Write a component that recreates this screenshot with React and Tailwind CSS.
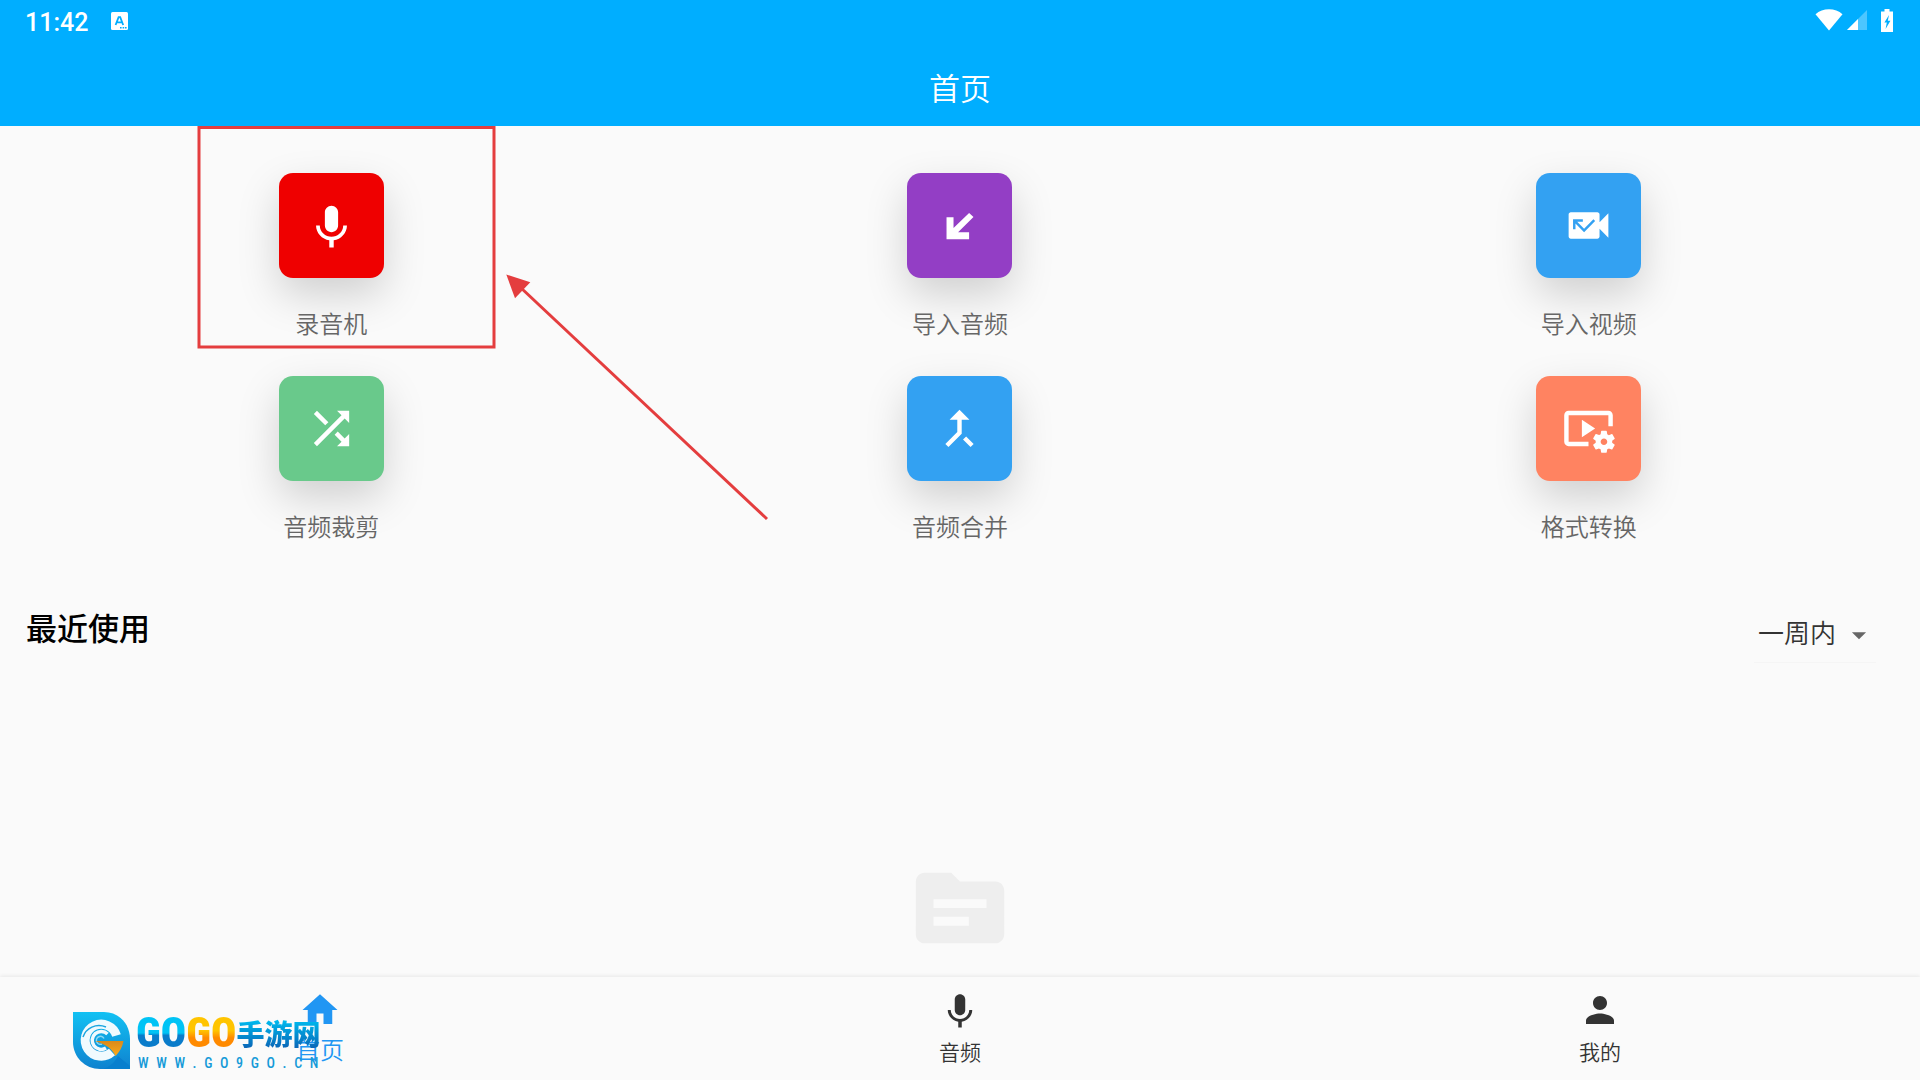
import { useState } from "react";
import {
  MdMissedVideoCall,
  MdShuffle,
  MdCallMerge,
  MdVideoSettings,
  MdSource,
  MdHome,
  MdPerson,
  MdArrowDropDown,
} from "react-icons/md";

const MicIcon = ({ className }) => (
  <svg viewBox="0 -1 24 24" fill="currentColor" className={className} aria-hidden="true">
    <path d="M12 14c1.66 0 2.99-1.34 2.99-3L15 5c0-1.66-1.34-3-3-3S9 3.34 9 5v6c0 1.66 1.34 3 3 3zm5.3-3c0 3-2.54 5.1-5.3 5.1S6.7 14 6.7 11H5c0 3.41 2.72 6.23 6 6.72V21h2v-3.28c3.28-.48 6-3.3 6-6.72h-1.7z" />
  </svg>
);

const ImportIcon = () => (
  <svg viewBox="0 0 24 24" fill="currentColor" className="size-[42px]" aria-hidden="true">
    <path d="M19.7 6.9 17.2 4.6 8.3 13.2V7H4.3v12.6h12.9v-4h-6.3z" />
  </svg>
);

const TOOLS = [
  { name: "录音机", color: "bg-[#ef0000]", icon: <MicIcon className="size-[53px]" /> },
  { name: "导入音频", color: "bg-[#933ec5]", icon: <ImportIcon /> },
  { name: "导入视频", color: "bg-[#33a1f2]", icon: <MdMissedVideoCall className="size-[53px]" /> },
  { name: "音频裁剪", color: "bg-[#69c98b]", icon: <MdShuffle className="size-[53px]" /> },
  { name: "音频合并", color: "bg-[#33a1f2]", icon: <MdCallMerge className="size-[53px]" /> },
  { name: "格式转换", color: "bg-[#ff8361]", icon: <MdVideoSettings className="size-[53px]" /> },
];

const TABS = [
  { name: "首页", icon: <MdHome className="size-[42px]" /> },
  { name: "音频", icon: <MicIcon className="size-[42px]" /> },
  { name: "我的", icon: <MdPerson className="size-[42px]" /> },
];

const StatusBar = () => (
  <div className="flex h-[42px] items-center justify-between pr-[27px] pl-[25px]">
    <div className="flex items-center gap-[23px]">
      <span className="pt-[4px] font-[Roboto,sans-serif] text-[25px] leading-[40px] font-medium">
        11:42
      </span>
      <svg viewBox="0 0 17 18" className="h-[18px] w-[17px]" aria-hidden="true">
        <rect width="17" height="18" rx="1.5" fill="#fff" />
        <path
          d="M4.6 13 7.6 5.2h1.6l3 7.8M5.8 10.4h5"
          fill="none"
          stroke="#00aeff"
          strokeWidth="1.8"
        />
        <path d="M9 15h1.6v1.6H9zM11.6 15h1.6v1.6h-1.6zM14 15h1.6v1.6H14z" fill="#00aeff" />
      </svg>
    </div>
    <div className="flex items-center pb-[2px]">
      <svg viewBox="0 0 28 22" className="h-[22px] w-[28px]" aria-hidden="true">
        <path d="M14 21.5.5 5.2C4 2 9 .3 14 .3S24 2 27.5 5.2z" fill="#fff" />
      </svg>
      <svg viewBox="0 0 20 20" className="ml-1 h-[20px] w-[20px]" aria-hidden="true">
        <path d="M0 20 20 0v20z" fill="#fff" fillOpacity=".3" />
        <path d="M0 20 11 9v11z" fill="#fff" />
      </svg>
      <svg viewBox="0 0 12 23" className="ml-[14px] h-[23px] w-[12px]" aria-hidden="true">
        <path d="M3.5 0h5v2.5H12V23H0V2.5h3.5z" fill="#fff" />
        <path d="M8 6 3.4 13.6h2.4L4.6 20l4.8-8.2H6.8z" fill="#00aeff" />
      </svg>
    </div>
  </div>
);

const Header = () => (
  <header className="bg-[#00aeff] text-white">
    <StatusBar />
    <h1 className="flex h-[84px] items-center justify-center pt-[5px] text-[31px] leading-[46px]">
      首页
    </h1>
  </header>
);

const ToolGrid = () => (
  <div className="grid grid-cols-3 gap-y-[20px] px-[17px] pt-[47px]">
    {TOOLS.map((tool) => (
      <button
        key={tool.name}
        type="button"
        className="flex cursor-pointer flex-col items-center justify-self-center text-[24px] leading-[36px] text-[#666]"
      >
        <span
          className={`flex size-[105px] items-center justify-center rounded-[14px] text-white shadow-[0_17px_42px_rgba(0,0,0,0.17)] ${tool.color}`}
        >
          {tool.icon}
        </span>
        <span className="mt-[27px] h-[51px]">{tool.name}</span>
      </button>
    ))}
  </div>
);

const Highlight = () => (
  <svg
    viewBox="0 0 580 400"
    className="pointer-events-none absolute top-[126px] left-[196px] h-[400px] w-[580px]"
    aria-hidden="true"
  >
    <rect x="3" y="1.5" width="295" height="219.5" fill="none" stroke="#e43d3e" strokeWidth="3" />
    <path d="M324 161 571 393" stroke="#e43d3e" strokeWidth="3" />
    <path d="M310.3 148.5 334.3 156.3 319 172.3z" fill="#e43d3e" />
  </svg>
);

const Recent = () => {
  const [range, setRange] = useState("week");

  return (
    <section className="mt-[45px] flex flex-1 flex-col">
      <div className="flex items-start justify-between pr-[44px] pl-[26px]">
        <h2 className="text-[31px] leading-[46px] font-medium text-black">最近使用</h2>
        <div className="relative border-b border-[#f5f5f5] pb-[4px]">
          <select
            aria-label="时间范围"
            value={range}
            onChange={(e) => setRange(e.target.value)}
            className="block h-[54px] w-[122px] appearance-none bg-transparent pl-[4px] text-[26px] text-[#333] outline-none"
          >
            <option value="week">一周内</option>
            <option value="month">一月内</option>
          </select>
          <MdArrowDropDown className="pointer-events-none absolute top-[14px] right-0 size-[34px] text-[#666]" />
        </div>
      </div>
      <div className="flex flex-1 items-end justify-center pb-[16px]">
        <MdSource className="size-[106px] text-[#eee]" />
      </div>
    </section>
  );
};

const TabBar = () => {
  const [active, setActive] = useState("首页");

  return (
    <nav className="grid h-[103px] grid-cols-3 bg-[#fafafa] shadow-[0_-1px_4px_rgba(0,0,0,0.08)]">
      {TABS.map((tab) => (
        <button
          key={tab.name}
          type="button"
          onClick={() => setActive(tab.name)}
          className={`flex cursor-pointer flex-col items-center pt-[12px] ${
            tab.name === active ? "text-[24px] text-[#2196f3]" : "text-[21px] text-[#333]"
          }`}
        >
          {tab.icon}
          <span className={tab.name === active ? "leading-[35px]" : "leading-[40px]"}>{tab.name}</span>
        </button>
      ))}
    </nav>
  );
};

const SiteLogo = () => (
  <div className="pointer-events-none absolute bottom-[11px] left-[73px] flex items-end gap-[6px]">
    <svg viewBox="0 0 57 57" className="size-[57px]" aria-hidden="true">
      <defs>
        <linearGradient id="leaf" x1="0" y1="0" x2="0" y2="1">
          <stop offset="0" stopColor="#12c1f3" />
          <stop offset="1" stopColor="#0f82cf" />
        </linearGradient>
        <linearGradient id="wedge" x1="0" y1="0" x2="0" y2="1">
          <stop offset="0" stopColor="#d98a1c" />
          <stop offset="1" stopColor="#fba919" />
        </linearGradient>
      </defs>
      <path d="M0 0h31c15 0 26 12 26 27v30H27C12 57 0 45 0 30z" fill="url(#leaf)" />
      <path d="M45 44 57 54v3H30c7-2 12-7 15-13z" fill="#087fce" />
      {/* outer ring, open on the right */}
      <path
        d="M43.500 23.500A16 16 0 1 0 39 40"
        fill="none"
        stroke="#f0fafe"
        strokeWidth="9"
      />
      <path d="M10 25C13 16 23 11 33 15" fill="none" stroke="#1ba6e0" strokeWidth="1.500" />
      {/* inner ring */}
      <path d="M34.500 22A9 9 0 1 0 33 36" fill="none" stroke="#f0fafe" strokeWidth="3.500" />
      <path d="M31 26.500A4 4 0 1 0 29 32" fill="none" stroke="#8ed8f2" strokeWidth="1.500" />
      <path d="M22 29h28.500c-1 6-4 11-8 15-3-7-10-12-20.500-15z" fill="url(#wedge)" />
    </svg>
    <div className="flex flex-col">
      <div className="flex h-[48px] items-center font-['Roboto_Condensed','Liberation_Sans_Narrow','Noto_Sans_CJK_SC',sans-serif] text-[42px] leading-[48px] font-black">
        <span className="bg-linear-to-b from-[#00c3f5] from-50% to-[#0a7cca] to-55% bg-clip-text text-transparent">
          GO
        </span>
        <span className="bg-linear-to-b from-[#ffc400] from-45% to-[#ff8a00] to-60% bg-clip-text text-transparent">
          GO
        </span>
        <span className="bg-linear-to-b from-[#00c0f2] from-20% to-[#0b68b8] to-80% bg-clip-text font-['Noto_Sans_CJK_SC',sans-serif] text-[28px] text-transparent">
          手游网
        </span>
      </div>
      <div className="flex justify-between px-[2px] font-['Roboto_Condensed','Liberation_Sans_Narrow',sans-serif] text-[14px] leading-[12px] font-medium text-[#169ad8]">
        {"WWW.GO9GO.CN".split("").map((char, i) => (
          <span key={i}>{char}</span>
        ))}
      </div>
    </div>
  </div>
);

const App = () => {
  return (
    <div
      lang="zh-CN"
      className="relative flex min-h-screen flex-col bg-[#fafafa] font-['Noto_Sans_CJK_SC',sans-serif] font-[350]"
    >
      <Header />
      <main className="flex flex-1 flex-col">
        <ToolGrid />
        <Recent />
      </main>
      <TabBar />
      <Highlight />
      <SiteLogo />
    </div>
  );
};

export default App;
